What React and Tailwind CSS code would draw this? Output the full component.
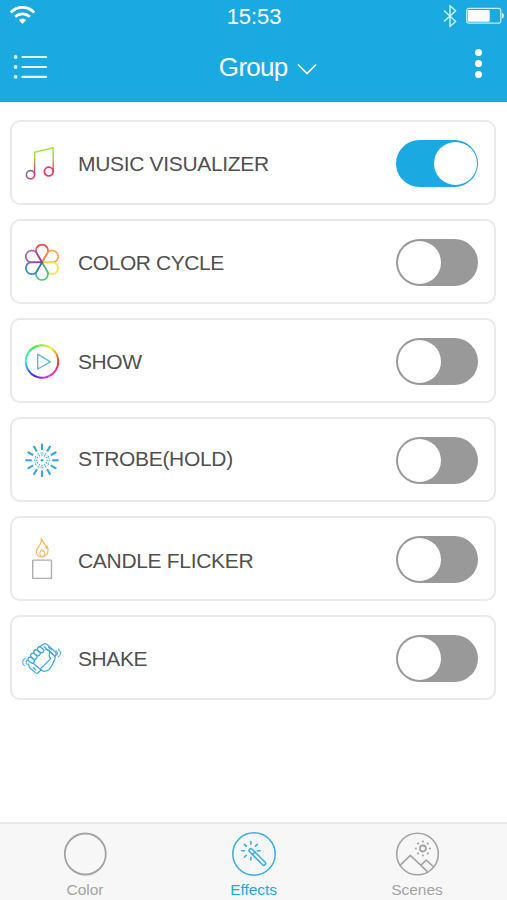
const PETALS = [
  [0, '#e8505a', '#d9476b'],
  [60, '#f7a24b', '#ee7a45'],
  [120, '#f3e63c', '#f0c93e'],
  [180, '#4cc08a', '#2fa78f'],
  [240, '#3c86c8', '#3a63ae'],
  [300, '#a45bb0', '#7a3f9c'],
];

function Icon({ children }) {
  return (
    <svg viewBox="-22 -22.5 44 45" className="h-[45px] w-11 shrink-0" fill="none" strokeLinecap="round" strokeLinejoin="round">
      {children}
    </svg>
  );
}

function MusicIcon() {
  return (
    <Icon>
      <defs>
        <linearGradient id="stem" gradientUnits="userSpaceOnUse" x1="0" y1="-14" x2="0" y2="12">
          <stop offset="0" stopColor="#9bee48" />
          <stop offset="0.3" stopColor="#a5d850" />
          <stop offset="0.65" stopColor="#c77b62" />
          <stop offset="1" stopColor="#d63474" />
        </linearGradient>
        <linearGradient id="note" x1="0" y1="0" x2="1" y2="1">
          <stop offset="0" stopColor="#6f86bd" />
          <stop offset="0.5" stopColor="#a85791" />
          <stop offset="1" stopColor="#d83b78" />
        </linearGradient>
      </defs>
      <path d="M-7.4 12.2V-10.3L11.2 -14.8V9" stroke="url(#stem)" strokeWidth="1.5" />
      <circle cx="-11.5" cy="12.3" r="4.1" stroke="url(#note)" strokeWidth="1.7" />
      <circle cx="6.7" cy="9.1" r="4.4" stroke="#e93668" strokeWidth="1.7" />
    </Icon>
  );
}

function FlowerIcon() {
  return (
    <Icon>
      <defs>
        {PETALS.map(([a, outer, inner]) => (
          <linearGradient key={a} id={`petal${a}`} gradientUnits="userSpaceOnUse" x1="0" y1="-17" x2="0" y2="0">
            <stop offset="0.3" stopColor={outer} />
            <stop offset="1" stopColor={inner} />
          </linearGradient>
        ))}
      </defs>
      <g transform="translate(0 .8)">
        {PETALS.map(([a]) => (
          <path key={a} d="M0 0L-5.3 -8.9A6 6 0 1 1 5.3 -8.9Z" transform={`rotate(${a})`} stroke={`url(#petal${a})`} strokeWidth="1.6" />
        ))}
      </g>
    </Icon>
  );
}

function ShowIcon() {
  const point = (deg) => {
    const t = (deg * Math.PI) / 180;
    return `${(16.2 * Math.sin(t)).toFixed(2)} ${(-16.2 * Math.cos(t)).toFixed(2)}`;
  };
  return (
    <Icon>
      <g transform="translate(0 1)">
        {Array.from({ length: 60 }, (_, i) => (
          <path key={i} d={`M${point(i * 6)}A16.2 16.2 0 0 1 ${point(i * 6 + 7)}`} stroke={`hsl(${(450 - i * 6) % 360} 88% 55%)`} strokeWidth="1.9" strokeLinecap="butt" />
        ))}
        <path d="M-4.3 -7.3V7.5L8.4 .3Z" stroke="#5dbbdc" strokeWidth="1.4" />
      </g>
    </Icon>
  );
}

function StrobeIcon() {
  return (
    <Icon>
      <g transform="translate(0 .8)" stroke="#35a8d8" strokeLinecap="butt">
        {Array.from({ length: 12 }, (_, i) => (
          <g key={i} transform={`rotate(${i * 30})`}>
            <path d="M0 -10.2V-16.6" strokeWidth="2.1" />
            <path d="M0 -4.5V-8.4" strokeWidth="1.1" strokeDasharray="1.5 .7" />
            <path d="M0 -6.2V-7.9" transform="rotate(15)" strokeWidth=".8" opacity=".6" />
          </g>
        ))}
        <circle r="1.3" fill="#35a8d8" stroke="none" />
      </g>
    </Icon>
  );
}

function CandleIcon() {
  return (
    <Icon>
      <path d="M-.8 -20C1 -15.5 4.5 -13.2 4.4 -10.1C5.1 -10.8 5.2 -11.8 5.1 -12.6C7.2 -8.8 6.5 -2.2 0 -1.5C-6.3 -2 -6.8 -7.7 -3.9 -11C-1.5 -13.8 -.3 -16.2 -.8 -20Z" stroke="#f6bd62" strokeWidth="1.2" />
      <path d="M.2 -1.7C-3.2 -2.6 -2.5 -6 -.2 -9.2C-.2 -7.3 1 -6.6 1.6 -7.8C3.8 -4.8 3.4 -2.4 .2 -1.7" stroke="#f6bd62" strokeWidth="1.1" />
      <rect x="-9.3" y="1.6" width="18.8" height="18.3" rx=".5" stroke="#adadad" strokeWidth="1.4" />
    </Icon>
  );
}

function ShakeIcon() {
  return (
    <Icon>
      <g stroke="#35a8dc" strokeWidth="1.15">
        <path d="M-3.2 -10.2L1.5 -13.4Q3.4 -14.6 5 -13.1L13.2 -5.8Q15 -4 13.5 -2L12.8 -1.2" />
        <path d="M-13.5 6.3L-12.8 9.2Q-12.3 10.5 -11 11.5L-6.2 15.4Q-4.8 16.3 -3.6 15L-1.4 12.8" />
        <path d="M-9.2 5.5L-1.2 12.2M2.1 -10.8L11.3 -2.8" />
        <rect x="-3.5" y="-2.1" width="7" height="4.2" rx="2.1" transform="translate(-10.8 2.7) rotate(38)" />
        <rect x="-3.5" y="-2.1" width="7" height="4.2" rx="2.1" transform="translate(-8.2 -1.3) rotate(38)" />
        <rect x="-3.5" y="-2.1" width="7" height="4.2" rx="2.1" transform="translate(-5 -4.7) rotate(38)" />
        <rect x="-3.5" y="-2.1" width="7" height="4.2" rx="2.1" transform="translate(-1.4 -7.7) rotate(38)" />
        <path d="M3.7 -7.7C6.7 -8.5 8.4 -5.8 7.3 -3.3C6.8 -1.7 7 -.3 8.7 1.2L-1.4 11.2C-.2 13.6 1.8 14.4 4.2 13.5C7 12.7 8.2 11.6 9.4 9L12.8 1.8C13.5 .2 13.1 -1.4 11.8 -2.5L7 -7" />
        <path d="M-8.9 10.2L-6.1 12.5M6.5 -10.3L9.4 -7.8" />
        <path d="M-17 .7C-20 3-20 6-17.7 8.1M-14.6 2.3C-16.3 3.8-16.2 5.3-15 6.7" opacity=".85" />
        <path d="M16.3 -8.3C19.4 -5.8 19.2 -2.7 16.4 -.8M14.3 -6.7C15.8 -5.3 15.9 -3.8 14.7 -2.4" opacity=".85" />
      </g>
    </Icon>
  );
}

function Toggle({ on }) {
  return (
    <button
      type="button"
      role="switch"
      aria-checked={on}
      className={`mt-0.5 flex h-[47px] w-[82px] items-center rounded-full px-[1.5px] ${on ? 'justify-end bg-[#1aa9e1]' : 'justify-start bg-[#999999]'}`}
    >
      <span className="size-[43px] rounded-full bg-white" />
    </button>
  );
}

const EFFECTS = [
  { label: 'MUSIC VISUALIZER', icon: MusicIcon, on: true, text: 'pt-[3px] tracking-[-0.33px]' },
  { label: 'COLOR CYCLE', icon: FlowerIcon, text: 'pt-[3px] tracking-[-0.42px]' },
  { label: 'SHOW', icon: ShowIcon, text: 'pt-[3px] tracking-[-0.4px]' },
  { label: 'STROBE(HOLD)', icon: StrobeIcon, text: 'pb-px tracking-[-0.32px]' },
  { label: 'CANDLE FLICKER', icon: CandleIcon, text: 'pt-[5px] tracking-[-0.32px]' },
  { label: 'SHAKE', icon: ShakeIcon, text: 'pt-[3px] tracking-[-0.4px]' },
];

function Header() {
  return (
    <header className="h-[102px] bg-[#1aa9e1] text-white">
      <div className="grid h-8 grid-cols-3 items-center pr-[3px] pl-[9px]">
        <svg viewBox="0 0 28 22" className="h-[22px] w-7" fill="none" stroke="white" strokeWidth="2.7">
          <path d="M1.7 7.5C8.5 .7 18.5 .7 25.3 7.5M6.1 11.8C10.5 7.8 16.5 7.8 20.9 11.8" />
          <path d="M9.8 15.1Q13.5 11.8 17.2 15.1L13.5 18.9Z" fill="white" stroke="none" />
        </svg>
        <span className="pt-px pr-[5px] text-center text-[22px] leading-[31px] tracking-[-0.1px]">15:53</span>
        <div className="flex items-center justify-end gap-[8px]">
          <svg viewBox="0 0 14 24" className="h-6 w-3.5" fill="none" stroke="#d9f5ff" strokeWidth="1.3">
            <path d="M1 6.6L12.7 17.4L7 22.4V1.8L12.7 6.8L1 17.4" />
          </svg>
          <svg viewBox="0 0 39 18" className="h-[18px] w-[39px]">
            <rect x="1.6" y="1.4" width="34.2" height="14.8" rx="2.5" fill="none" stroke="#bdefff" strokeWidth="1.2" />
            <rect x="2.7" y="2.9" width="22" height="11.8" rx="1" fill="white" />
            <path d="M36.8 5.8Q39 6.4 39 8.8T36.8 11.8Z" fill="#e8faff" />
          </svg>
        </div>
      </div>
      <div className="grid h-[70px] grid-cols-3 items-center pr-[25.5px] pl-[13px]">
        <svg viewBox="0 0 36 28" className="h-7 w-9" fill="#e6faff">
          {[4, 14, 23.8].map((y) => (
            <g key={y}>
              <circle cx="2.6" cy={y} r="1.9" />
              <rect x="8.4" y={y - 1.1} width="25.8" height="2.2" rx="1" />
            </g>
          ))}
        </svg>
        <div className="flex items-center justify-center gap-[9px] pl-[41px]">
          <span className="text-[26px] leading-[30px] tracking-[-0.7px]">Group</span>
          <svg viewBox="0 0 20 12" className="mt-1 h-3 w-5 shrink-0" fill="none" stroke="white" strokeWidth="1.6">
            <path d="M1 1.5L10 10.5L19 1.5" />
          </svg>
        </div>
        <div className="mb-[7px] flex flex-col items-end gap-[4.3px]">
          <i className="size-[7px] rounded-full bg-white" />
          <i className="size-[7px] rounded-full bg-white" />
          <i className="size-[7px] rounded-full bg-white" />
        </div>
      </div>
    </header>
  );
}

function TabBar() {
  return (
    <nav className="grid h-[78px] grid-cols-[170px_167px_160px] border-t-2 border-[#e7e7e7] bg-[#f7f7f7] pt-2 text-[15.5px] leading-[18px] text-[#a3a3a3]">
      <button type="button" className="flex flex-col items-center gap-[5px]">
        <svg viewBox="-22 -22 44 44" className="size-11 shrink-0" fill="none" stroke="#a3a3a3" strokeWidth="1.8">
          <circle cx=".3" r="20.5" />
        </svg>
        <span>Color</span>
      </button>
      <button type="button" className="flex flex-col items-center gap-[5px] text-[#1aa9e1]">
        <svg viewBox="-22 -22 44 44" className="size-11 shrink-0" fill="none" stroke="#35ade0" strokeWidth="1.5" strokeLinecap="round">
          <circle r="21.2" />
          <g transform="translate(-3.1 -3.5) rotate(-45)">
            <rect x="-1.8" y="-1.9" width="3.6" height="22" rx="1.8" />
            <path d="M-1.8 4H1.8" />
          </g>
          {[0, 45, 90, 180, 225, 270, 315].map((a) => (
            <path key={a} d="M0 -6.5V-9.2" transform={`translate(-3.1 -3.3) rotate(${a})`} />
          ))}
        </svg>
        <span className="tracking-[-0.05px]">Effects</span>
      </button>
      <button type="button" className="flex flex-col items-center gap-[5px]">
        <svg viewBox="-22 -22 44 44" className="size-11 shrink-0" fill="none" stroke="#a3a3a3" strokeWidth="1.6">
          <circle cx=".5" r="20.8" />
          <path d="M-17.5 11.8L-6.7 1.4L10.5 17.7M4 11.2L9.2 6.2L16.2 12.5" />
          <circle cx="5.9" cy="-5.5" r="3" strokeWidth="1.8" />
          <g fill="#a3a3a3" stroke="none">
            {[0, 45, 90, 135, 180, 225, 270, 315].map((a) => (
              <circle key={a} cy="-7" r="1.1" transform={`translate(5.9 -5.5) rotate(${a})`} />
            ))}
          </g>
        </svg>
        <span>Scenes</span>
      </button>
    </nav>
  );
}

export default function App() {
  return (
    <div className="flex h-[900px] w-[507px] flex-col overflow-hidden bg-white font-['Liberation_Sans',Arial,sans-serif]">
      <Header />
      <main className="flex flex-1 flex-col gap-3.5 pt-[18px] pr-[11px] pl-2.5">
        {EFFECTS.map(({ label, icon: Glyph, on = false, text }) => (
          <section key={label} className="flex h-[85px] items-center rounded-[10px] border-2 border-[#e9e9e9] pr-4 pl-2">
            <Glyph />
            <h2 className={`ml-3.5 flex-1 text-[21px] leading-6 whitespace-nowrap text-[#505050] ${text}`}>{label}</h2>
            <Toggle on={on} />
          </section>
        ))}
      </main>
      <TabBar />
    </div>
  );
}
